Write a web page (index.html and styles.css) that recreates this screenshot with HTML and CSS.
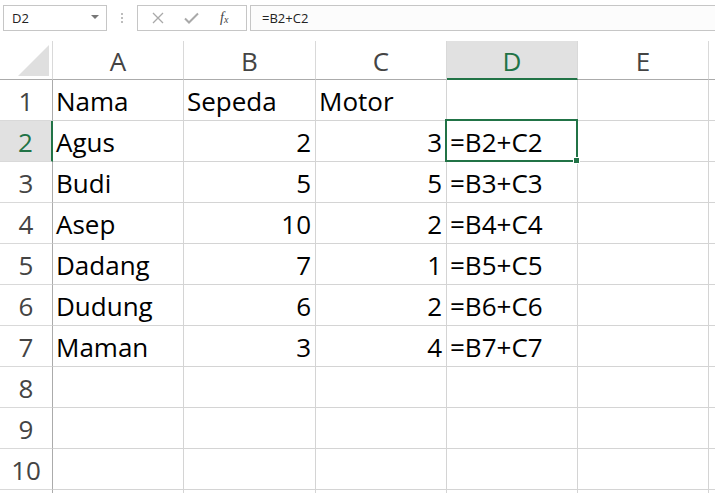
FILE: index.html
```html
<!DOCTYPE html>
<html>
<head>
<meta charset="utf-8">
<link rel="stylesheet" href="styles.css">
</head>
<body>
<div class="toolbar">
  <div class="namebox"><span class="name">D2</span><span class="caret"></span></div>
  <div class="dots"><i></i><i></i><i></i></div>
  <div class="btnbox">
    <svg class="ico" width="12" height="12" viewBox="0 0 12 12"><path d="M1 1L11 11M11 1L1 11" stroke="#a9a9a9" stroke-width="1.3" fill="none"/></svg>
    <svg class="ico" width="15" height="12" viewBox="0 0 15 12"><path d="M1 6.5L5 10.5L14 1.5" stroke="#a9a9a9" stroke-width="2" fill="none"/></svg>
    <span class="fx">f<sub>x</sub></span>
  </div>
  <div class="formula">=B2+C2</div>
</div>
<div class="sheet">
  <div class="corner"><span class="tri"></span></div>
  <div class="ch">A</div><div class="ch">B</div><div class="ch">C</div><div class="ch sel">D</div><div class="ch">E</div><div class="ch"></div>

  <div class="rh">1</div><div class="c">Nama</div><div class="c">Sepeda</div><div class="c">Motor</div><div class="c"></div><div class="c"></div><div class="c"></div>
  <div class="rh sel">2</div><div class="c">Agus</div><div class="c n">2</div><div class="c n">3</div><div class="c active">=B2+C2<span class="selbox"><span class="handle"></span></span></div><div class="c"></div><div class="c"></div>
  <div class="rh">3</div><div class="c">Budi</div><div class="c n">5</div><div class="c n">5</div><div class="c">=B3+C3</div><div class="c"></div><div class="c"></div>
  <div class="rh">4</div><div class="c">Asep</div><div class="c n">10</div><div class="c n">2</div><div class="c">=B4+C4</div><div class="c"></div><div class="c"></div>
  <div class="rh">5</div><div class="c">Dadang</div><div class="c n">7</div><div class="c n">1</div><div class="c">=B5+C5</div><div class="c"></div><div class="c"></div>
  <div class="rh">6</div><div class="c">Dudung</div><div class="c n">6</div><div class="c n">2</div><div class="c">=B6+C6</div><div class="c"></div><div class="c"></div>
  <div class="rh">7</div><div class="c">Maman</div><div class="c n">3</div><div class="c n">4</div><div class="c">=B7+C7</div><div class="c"></div><div class="c"></div>
  <div class="rh">8</div><div class="c"></div><div class="c"></div><div class="c"></div><div class="c"></div><div class="c"></div><div class="c"></div>
  <div class="rh">9</div><div class="c"></div><div class="c"></div><div class="c"></div><div class="c"></div><div class="c"></div><div class="c"></div>
  <div class="rh">10</div><div class="c"></div><div class="c"></div><div class="c"></div><div class="c"></div><div class="c"></div><div class="c"></div>
  <div class="rh last"></div><div class="c"></div><div class="c"></div><div class="c"></div><div class="c"></div><div class="c"></div><div class="c"></div>
</div>
</body>
</html>
```
FILE: styles.css
```css
* { box-sizing: border-box; }
html, body { margin: 0; padding: 0; background: #fff; overflow: hidden; }
body { width: 715px; height: 493px; font-family: "Open Sans", "Liberation Sans", sans-serif; }

.toolbar {
  height: 41px;
  display: flex;
  align-items: flex-start;
  padding-top: 5px;
  padding-left: 3px;
}
.namebox {
  width: 104px;
  height: 26px;
  border: 1px solid #c6c6c6;
  background: #fff;
  display: flex;
  align-items: center;
  justify-content: space-between;
  padding: 0 7px 0 8px;
  font-size: 13px;
  color: #222;
}
.caret {
  width: 0; height: 0;
  border-left: 4px solid transparent;
  border-right: 4px solid transparent;
  border-top: 4px solid #777;
  margin-top: -3px;
}
.dots {
  width: 30px;
  height: 26px;
  display: flex;
  flex-direction: column;
  align-items: center;
  justify-content: center;
  gap: 2px;
}
.dots i { display: block; width: 2px; height: 2px; background: #bdbdbd; }
.btnbox {
  width: 110px;
  height: 26px;
  border: 1px solid #c6c6c6;
  display: flex;
  align-items: center;
  padding-left: 14px;
  gap: 22px;
}
.ico { display: block; }
.btnbox .ico:nth-child(2) { margin-left: -2px; }
.fx {
  font-family: "Liberation Serif", serif;
  font-style: italic;
  font-size: 14px;
  color: #444;
  margin-left: -1px;
}
.fx sub { font-size: 10px; vertical-align: -1px; }
.formula {
  flex: 1;
  margin-left: 3px;
  height: 26px;
  border: 1px solid #c6c6c6;
  border-right: none;
  background: #fcfcfc;
  font-size: 13px;
  color: #222;
  line-height: 24px;
  padding-left: 11px;
}

.sheet {
  display: grid;
  grid-template-columns: 53px 131px 132px 131px 131px 131px 1fr;
  grid-template-rows: 39px repeat(10, 41px) 4px;
  height: 452px;
  overflow: hidden;
}
.corner {
  border-right: 1px solid #d9d9d9;
  border-bottom: 1px solid #ababab;
  position: relative;
}
.tri {
  position: absolute;
  left: 18px; top: 4px;
  width: 31px; height: 31px;
  background: #dfdfdf;
  clip-path: polygon(100% 0, 100% 100%, 0 100%);
}
.ch {
  border-right: 1px solid #d9d9d9;
  border-bottom: 1px solid #ababab;
  color: #444;
  font-size: 26px;
  line-height: 1;
  display: flex;
  align-items: flex-end;
  justify-content: center;
  padding-bottom: 5px;
}
.ch.sel {
  background: #e1e1e1;
  color: #217346;
  border-bottom: 2px solid #217346;
  padding-bottom: 4px;
}
.rh {
  border-right: 1px solid #ababab;
  border-bottom: 1px solid #d9d9d9;
  color: #444;
  font-size: 26px;
  line-height: 1;
  display: flex;
  align-items: flex-end;
  justify-content: center;
  padding-bottom: 6px;
}
.rh.last { padding: 0; }
.rh.sel {
  background: #e1e1e1;
  color: #217346;
  border-right: 2px solid #217346;
}
.c {
  border-right: 1px solid #d4d4d4;
  border-bottom: 1px solid #d4d4d4;
  color: #000;
  font-size: 26px;
  line-height: 1;
  display: flex;
  align-items: flex-end;
  padding: 0 4px 6px 3px;
  white-space: nowrap;
}
.c.n { justify-content: flex-end; }
.c.active { position: relative; }
.selbox {
  position: absolute;
  top: -2px; left: -2px; right: -1px; bottom: -1px;
  border: 2px solid #217346;
}
.handle {
  position: absolute;
  right: -4px; bottom: -4px;
  width: 7px; height: 7px;
  background: #217346;
  border: 1px solid #fff;
}
```
